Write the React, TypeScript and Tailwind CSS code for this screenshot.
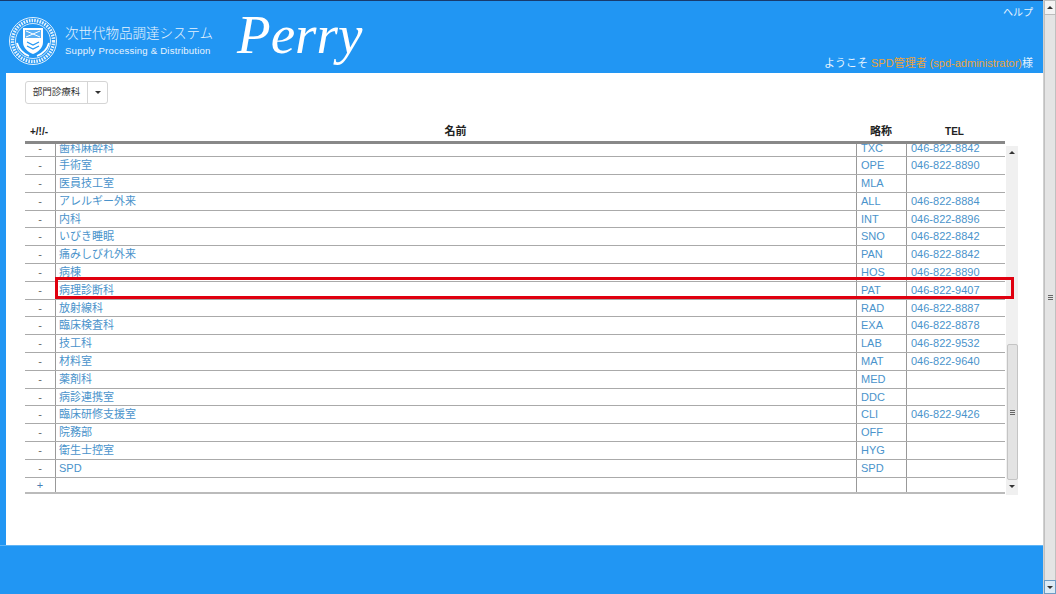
const rows: [string, string, string][] = [
  ["歯科麻酔科", "TXC", "046-822-8842"],
  ["手術室", "OPE", "046-822-8890"],
  ["医員技工室", "MLA", ""],
  ["アレルギー外来", "ALL", "046-822-8884"],
  ["内科", "INT", "046-822-8896"],
  ["いびき睡眠", "SNO", "046-822-8842"],
  ["痛みしびれ外来", "PAN", "046-822-8842"],
  ["病棟", "HOS", "046-822-8890"],
  ["病理診断科", "PAT", "046-822-9407"],
  ["放射線科", "RAD", "046-822-8887"],
  ["臨床検査科", "EXA", "046-822-8878"],
  ["技工科", "LAB", "046-822-9532"],
  ["材料室", "MAT", "046-822-9640"],
  ["薬剤科", "MED", ""],
  ["病診連携室", "DDC", ""],
  ["臨床研修支援室", "CLI", "046-822-9426"],
  ["院務部", "OFF", ""],
  ["衛生士控室", "HYG", ""],
  ["SPD", "SPD", ""],
];

function Emblem() {
  return (
    <svg width="50" height="52" viewBox="0 0 50 52" fill="none" className="shrink-0">
      <circle cx="25" cy="26" r="23.5" stroke="#e3f1fd" strokeWidth="1" />
      <circle cx="25" cy="26" r="20.5" stroke="#e3f1fd" strokeWidth="3.4" strokeDasharray="1.6 1.1" />
      <circle cx="25" cy="26" r="17.5" stroke="#ffffff" strokeWidth="0.8" />
      <path d="M15 13h20v14c0 6-5 10-10 12-5-2-10-6-10-12z" fill="#ffffff" />
      <path d="M17 15h16v8H17z" fill="#2196f3" opacity="0.75" />
      <path d="M18 16l14 6M32 16l-14 6" stroke="#ffffff" strokeWidth="1" />
      <path d="M19 27l6 3 6-3M19 31l6 3 6-3" stroke="#2196f3" strokeWidth="1.2" />
      <path d="M9 28c2 7 7 11 12 13M41 28c-2 7-7 11-12 13" stroke="#ffffff" strokeWidth="1.8" />
    </svg>
  );
}

function ArrowUp() {
  return <span className="w-0 h-0 border-x-[3px] border-x-transparent border-b-[3px] border-b-[#333]" />;
}

function ArrowDown() {
  return <span className="w-0 h-0 border-x-[3px] border-x-transparent border-t-[3px] border-t-[#333]" />;
}

function Grip() {
  return (
    <div className="flex flex-col gap-[1px]">
      <span className="block w-[5px] h-[1px] bg-[#666]" />
      <span className="block w-[5px] h-[1px] bg-[#666]" />
      <span className="block w-[5px] h-[1px] bg-[#666]" />
    </div>
  );
}

export default function App() {
  return (
    <div
      className="relative flex h-[594px] w-[1056px] overflow-hidden bg-white text-[11px]"
      style={{ fontFamily: '"Liberation Sans", "Noto Sans CJK JP", sans-serif' }}
    >
      <div className="flex w-[1043px] flex-col">
        <header className="flex h-[73px] shrink-0 items-start border-t border-[#173a6e] bg-[#2196f3] text-white">
          <div className="ml-[8px] mt-[14px]">
            <Emblem />
          </div>
          <div className="ml-[7px] mt-[24px] flex flex-col">
            <span className="text-[13.5px] leading-[18px] font-light text-[#e6f3fe]">次世代物品調達システム</span>
            <span className="mt-[2px] text-[9.6px] leading-[12px] tracking-[0.2px] text-[#e6f3fe]">Supply Processing &amp; Distribution</span>
          </div>
          <span
            className="ml-[24px] mt-[2px] text-[55px] leading-[64px] italic"
            style={{ fontFamily: '"Liberation Serif", serif' }}
          >
            Perry
          </span>
          <div className="ml-auto mr-[10px] flex h-full flex-col items-end justify-between pt-[5px] pb-[3px]">
            <span className="text-[10px] leading-[14px] text-[#e6f3fe]">ヘルプ</span>
            <span className="leading-[14px] text-[#e6f3fe]">
              ようこそ <span className="text-[#e8a33d]">SPD管理者 (spd-administrator)</span>様
            </span>
          </div>
        </header>

        <main className="flex h-[472px] shrink-0">
          <div className="w-[6px] bg-[#2196f3]" />
          <div className="flex-1 pl-[19px] pt-[8px]">
            <div className="flex h-[23px] w-[83px] rounded-[3px] border border-[#d5d5d5] text-[#333]">
              <div className="flex w-[62px] items-center justify-center border-r border-[#d5d5d5] text-[9.5px]">部門診療科</div>
              <div className="flex flex-1 items-center justify-center">
                <ArrowDown />
              </div>
            </div>

            <div className="mt-[18px] flex h-[19px] w-[980px] items-center font-bold text-[#222]">
              <span className="w-[30px] pl-[5px] text-[10px]">+/!/-</span>
              <span className="w-[801px] text-center">名前</span>
              <span className="w-[50px] text-center">略称</span>
              <span className="w-[99px] pr-[2px] text-center text-[10px]">TEL</span>
            </div>
            <div className="h-[3px] w-[980px] bg-[#888]" />

            <div className="flex h-[351px]">
              <div className="h-full w-[980px] overflow-hidden">
                <div className="-mt-[4.5px]">
                  {rows.map(([name, code, tel]) => (
                    <div key={code} className="flex h-[17.8px] border-b border-[#aaa] leading-[16.8px] text-[#4a93cb]">
                      <span className="w-[30px] text-center text-[#666]">-</span>
                      <span className="w-[801px] border-l border-[#999] pl-[3px]">{name}</span>
                      <span className="w-[50px] border-l border-[#999] pl-[4px]">{code}</span>
                      <span className="w-[99px] border-l border-[#999] pl-[4px]">{tel}</span>
                    </div>
                  ))}
                  <div className="flex h-[16.5px] border-b-2 border-[#bbb] leading-[14px]">
                    <span className="w-[30px] text-center text-[#4a7fb5]">+</span>
                    <span className="w-[801px] border-l border-[#999]" />
                    <span className="w-[50px] border-l border-[#999]" />
                    <span className="w-[99px] border-l border-[#999]" />
                  </div>
                </div>
              </div>
              <div className="ml-px mt-[2px] flex h-[349px] w-[12px] flex-col items-center bg-[#f0f0f0]">
                <div className="flex h-[12px] items-center">
                  <ArrowUp />
                </div>
                <div className="mt-[186px] flex h-[136px] w-[11px] items-center justify-center rounded-[2px] border border-[#c4c4c4] bg-[#e3e3e3]">
                  <Grip />
                </div>
                <div className="flex h-[13px] items-center">
                  <ArrowDown />
                </div>
              </div>
            </div>
          </div>
        </main>

        <footer className="flex-1 border-t border-[#5fb4f6] bg-[#2196f3]" />
      </div>

      <div className="flex w-[13px] flex-col items-center border-l border-[#d0d0d0] bg-[#efefef]">
        <div className="flex h-[15px] w-full items-center justify-center border border-[#bcbcbc] bg-[#f4f4f4]">
          <ArrowUp />
        </div>
        <div className="flex flex-1 w-full items-center justify-center border-x border-[#c0c0c0] bg-[#e4e4e4]">
          <Grip />
        </div>
        <div className="flex h-[14px] w-full items-center justify-center border border-[#6c9cc4] bg-[#dcebf6]">
          <ArrowDown />
        </div>
      </div>

      {/* annotation on the screenshot */}
      <div className="pointer-events-none absolute left-[55px] top-[277px] h-[22px] w-[959px] border-[3px] border-[#e0000f]" />
    </div>
  );
}
